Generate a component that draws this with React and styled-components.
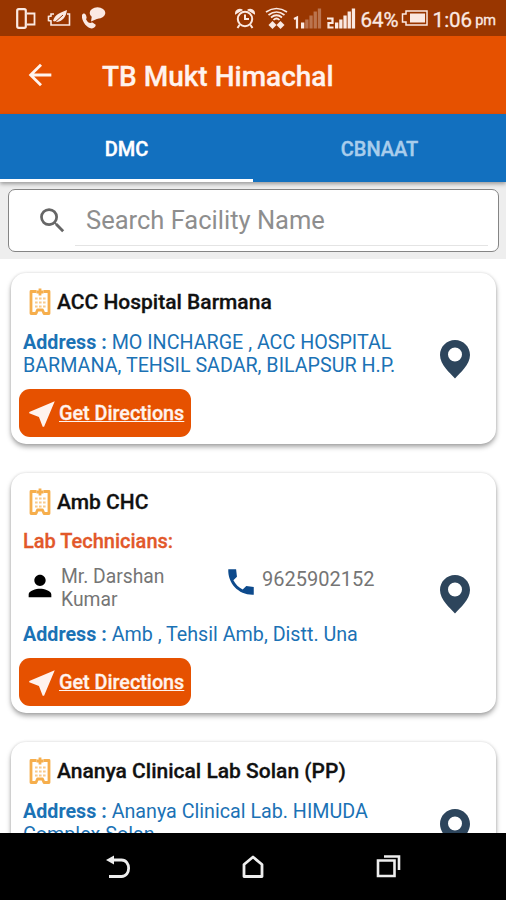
import React from 'react';
import styled, { createGlobalStyle } from 'styled-components';
import { MdArrowBack, MdSearch, MdPerson, MdNearMe } from 'react-icons/md';

const GlobalStyle = createGlobalStyle`
    * {
        box-sizing: border-box;
    }
    body {
        margin: 0;
        background: #ffffff;
        font-family: Roboto, "Liberation Sans", sans-serif;
    }
    svg {
        display: block;
        flex: none;
    }
`;

const Screen = styled.div`
    width: 506px;
    height: 900px;
    display: flex;
    flex-direction: column;
    overflow: hidden;
    background: #ffffff;
`;
const StatusBar = styled.div`
    flex: none;
    height: 36px;
    padding: 0 10px 0 16px;
    display: flex;
    align-items: center;
    justify-content: space-between;
    background: #993600;
    color: #fbe9e2;
`;
const StatusGroup = styled.div`
    display: flex;
    align-items: center;
    gap: ${props => props.$gap}px;
`;
const StatusText = styled.span`
    font-size: ${props => props.$size || 20.5}px;
    line-height: 24px;
    padding-top: ${props => props.$top || 3}px;
    white-space: nowrap;
    -webkit-text-stroke: 0.3px currentColor;
`;
const AppBar = styled.header`
    flex: none;
    height: 78px;
    padding-left: 23px;
    display: flex;
    align-items: center;
    background: #e65100;
    color: #fff3ee;
`;
const AppTitle = styled.h1`
    margin: 3px 0 0 45px;
    font-size: 28px;
    font-weight: 500;
    line-height: 34px;
    white-space: nowrap;
    -webkit-text-stroke: 0.3px currentColor;
`;
const Tabs = styled.nav`
    flex: none;
    height: 68px;
    display: grid;
    grid-template-columns: 1fr 1fr;
    background: #1270bf;
    box-shadow: 0 2px 4px rgba(0, 0, 0, 0.35);
    position: relative;
`;
const Tab = styled.div`
    display: flex;
    align-items: center;
    justify-content: center;
    padding-top: 5px;
    border-bottom: 3px solid ${props => (props.$active ? '#ffffff' : 'transparent')};
    color: ${props => (props.$active ? '#ffffff' : '#a9cdec')};
    font-size: 20px;
    font-weight: 500;
    -webkit-text-stroke: 0.4px currentColor;
`;
const SearchArea = styled.div`
    flex: none;
    height: 77px;
    padding: 7px 7px 0 8px;
    background: #eeeeee;
`;
const SearchBox = styled.div`
    height: 63px;
    padding: 0 10px 0 27px;
    display: flex;
    align-items: center;
    background: #ffffff;
    border: 1px solid #858585;
    border-radius: 7px;
    color: #666666;
`;
const SearchField = styled.div`
    flex: 1;
    height: 50px;
    margin: 0 0 0 6px;
    padding: 0 0 0 11px;
    display: flex;
    align-items: center;
    border-bottom: 1px solid #e4e4e4;
    color: #8e8e8e;
    font-size: 25.5px;
    white-space: nowrap;
`;
const List = styled.main`
    flex: 1;
    min-height: 0;
    padding: 14px 10px 0 11px;
    display: flex;
    flex-direction: column;
    gap: 29px;
    overflow: hidden;
`;
const Card = styled.section`
    flex: none;
    padding: 12px 26px 7px 8px;
    display: flex;
    align-items: center;
    justify-content: space-between;
    background: #ffffff;
    border-radius: 15px;
    box-shadow: 0 3px 5px rgba(0, 0, 0, 0.34), 0 0 3px rgba(0, 0, 0, 0.12);
`;
const CardBody = styled.div`
    width: 395px;
    display: flex;
    flex-direction: column;
    align-items: flex-start;
`;
const CardTitle = styled.div`
    height: 34px;
    padding-left: 9px;
    display: flex;
    align-items: center;
    gap: 5px;
    color: #111111;
    font-size: 21px;
    font-weight: 500;
    white-space: nowrap;
    -webkit-text-stroke: 0.3px currentColor;
`;
const Technicians = styled.div`
    margin: 11px 0 0 4px;
    color: #e2582a;
    font-size: 20px;
    font-weight: 500;
    line-height: 23px;
    -webkit-text-stroke: 0.3px currentColor;
`;
const Contact = styled.div`
    margin-top: 12px;
    height: 46px;
    padding-left: 4px;
    display: grid;
    grid-template-columns: 38px 163px 38px 1fr;
    align-items: start;
    color: #757575;
    line-height: 23px;
`;
const ContactIcon = styled.span`
    padding-top: ${props => props.$top || 0}px;
    color: ${props => props.$color};
`;
const ContactText = styled.span`
    max-width: 130px;
    padding-top: ${props => props.$top || 0}px;
    font-size: ${props => props.$size}px;
`;
const Address = styled.div`
    margin: 12px 0 0 4px;
    color: #1b72b5;
    font-size: 19.7px;
    line-height: 23px;
`;
const Label = styled.span`
    font-weight: 700;
`;
const DirectionsButton = styled.button`
    width: 172px;
    height: 48px;
    margin-top: 12px;
    padding: 1px 0 0 6px;
    display: flex;
    align-items: center;
    border: 0;
    border-radius: 11px;
    background: #e65100;
    color: #fff3ee;
    font-family: inherit;
    font-size: 19.8px;
    font-weight: 500;
    text-decoration: underline;
    white-space: nowrap;
    -webkit-text-stroke: 0.3px currentColor;
`;
const NavBar = styled.footer`
    flex: none;
    height: 67px;
    padding: 0 105px 0 105px;
    display: flex;
    align-items: center;
    justify-content: space-between;
    background: #000000;
`;

const PhoneIcon = () => (
    <svg width="20" height="21" viewBox="0 0 20 21" fill="none" stroke="currentColor" strokeWidth="2.200">
        <rect x="1.200" y="1.200" width="8.600" height="18.600" rx="1.500" />
        <path d="M11 5.500h7.500v11H11" strokeWidth="1.800" />
    </svg>
);
const PowerSaverIcon = () => (
    <svg width="24" height="17" viewBox="0 0 24 17" fill="none" stroke="currentColor" strokeWidth="1.600">
        <path d="M7 4H4v2L1.500 6.500v4L4 11v4h18.500V4H20" />
        <path d="M6 11C8 4 13 3 20 0c-1 7-4 11-10 12z" fill="currentColor" stroke="none" />
        <path d="M6 14l10-9" stroke="#993600" strokeWidth="1" />
    </svg>
);
const CallBubbleIcon = () => (
    <svg width="24" height="22" viewBox="0 0 24 22" fill="currentColor">
        <path d="M0 8c2-3 4-1 4.500 2 .5 1-1 2 0 3 1 2 2 3 4 3 1-1 2-1 5 1.500 1 2-2 4-4 4C4 21-1 13 0 8z" />
        <ellipse cx="15.500" cy="6" rx="7.800" ry="5.800" />
        <path d="M10 8l-1 6.500 7-3z" />
    </svg>
);
const AlarmIcon = () => (
    <svg width="20" height="21" viewBox="0 0 20 21" fill="none" stroke="currentColor" strokeWidth="2">
        <circle cx="10" cy="11" r="7.200" />
        <path d="M10 6.500V11h4M4.500 17L2.500 20M15.500 17l2 3" />
        <path d="M1 5c0-2 3-4 5-3zM19 5c0-2-3-4-5-3z" fill="currentColor" />
    </svg>
);
const WifiIcon = () => (
    <svg width="23" height="23" viewBox="0 0 23 23" fill="none" stroke="currentColor" strokeWidth="1.700">
        <path d="M1 5Q11.500-2 22 5M3.500 8Q11.500 2 19.500 8M6 10.500Q11.500 6 17 10.500M8.500 13Q11.500 10 14.500 13" />
        <path d="M3.500 18l4-4 4 4-4 4zM11.500 18l4-4 4 4-4 4z" fill="currentColor" stroke="none" />
    </svg>
);
const SimSignal = ({ sim, level }) => (
    <svg width="29" height="22" viewBox="0 0 29 22" fill="currentColor">
        {sim === 1 ? (
            <path d="M1 12l3-1.500v11" fill="none" stroke="currentColor" strokeWidth="2.200" />
        ) : (
            <path d="M0 11.500h5.500v4.500H1.500v4.500h5" fill="none" stroke="currentColor" strokeWidth="2.200" />
        )}
        {[6, 9, 13, 17, 20].map((height, i) => (
            <rect key={height} x={8 + i * 4.2} y={21.5 - height} width="3.300" height={height} opacity={i < level ? 1 : 0.35} />
        ))}
    </svg>
);
const BatteryIcon = () => (
    <svg width="27" height="16" viewBox="0 0 27 16">
        <path d="M5 1h21v14H5v-3H1.500V4H5z" fill="none" stroke="currentColor" strokeWidth="1.500" />
        <path d="M9 3.500h15v9H9z" fill="currentColor" />
    </svg>
);
const HospitalIcon = () => (
    <svg width="24" height="28" viewBox="0 0 24 28" fill="none" stroke="#f6ae4c">
        <path d="M8.500 3.500H3V25.500h5l1.500-3.500h5l1.500 3.500h5V3.500h-5.500" strokeWidth="2.800" strokeLinejoin="round" />
        <path d="M12 0.500v7M8.500 4h7" strokeWidth="2.800" />
        <path d="M7 10.500h11M7 14.500h11M7 18.500h11" strokeWidth="2.200" strokeDasharray="2.600 1.400" opacity="0.65" />
    </svg>
);
const HandsetIcon = () => (
    <svg width="34" height="34" viewBox="0 0 24 24" fill="currentColor">
        <path d="M21 15.460l-5.270-.61-2.520 2.520c-2.830-1.440-5.150-3.750-6.590-6.590l2.530-2.530L8.540 3H3.030C2.450 13.180 10.820 21.550 21 20.970v-5.510z" />
    </svg>
);
const PinIcon = () => (
    <svg width="30" height="42" viewBox="0 0 30 42">
        <path
            d="M15 0C6.700 0 0 6.700 0 15c0 9.500 10 18 15 23.500 5-5.500 15-14 15-23.500C30 6.700 23.300 0 15 0zm0 21.500a7 7 0 1 1 0-14 7 7 0 0 1 0 14z"
            fill="#2d455c"
        />
    </svg>
);
const BackIcon = () => (
    <svg width="26" height="24" viewBox="0 0 26 24" fill="none" stroke="#eeeeee" strokeWidth="2.800">
        <path d="M6 5h10.500c9.500 0 9.500 16.500 0 16.500H4" />
        <path d="M1 5l8-4.500v9z" fill="#eeeeee" stroke="none" />
    </svg>
);
const HomeIcon = () => (
    <svg width="23" height="24" viewBox="0 0 23 24" fill="none" stroke="#eeeeee" strokeWidth="2.800" strokeLinejoin="round">
        <path d="M2 9.500l9-7.500 9 7.500v12H2z" />
    </svg>
);
const RecentIcon = () => (
    <svg width="25" height="23" viewBox="0 0 25 23" fill="none" stroke="#eeeeee" strokeWidth="2.600">
        <path d="M2 5.500h16.500v15.500H2z" />
        <path d="M8 1.500h15V15" />
    </svg>
);

const facilities = [
    {
        name: 'ACC Hospital Barmana',
        address: 'MO INCHARGE , ACC HOSPITAL BARMANA, TEHSIL SADAR, BILAPSUR H.P.',
    },
    {
        name: 'Amb CHC',
        technician: 'Mr. Darshan Kumar',
        phone: '9625902152',
        address: 'Amb , Tehsil Amb, Distt. Una',
    },
    {
        name: 'Ananya Clinical Lab Solan (PP)',
        address: 'Ananya Clinical Lab. HIMUDA Complex Solan',
    },
];

const FacilityCard = ({ facility }) => (
    <Card>
        <CardBody>
            <CardTitle>
                <HospitalIcon />
                {facility.name}
            </CardTitle>
            {facility.technician && (
                <>
                    <Technicians>Lab Technicians:</Technicians>
                    <Contact>
                        <ContactIcon $color="#000000" $top={4}><MdPerson size={34} /></ContactIcon>
                        <ContactText $size={19.3}>{facility.technician}</ContactText>
                        <ContactIcon $color="#0d4a8c"><HandsetIcon /></ContactIcon>
                        <ContactText $size={20} $top={3}>{facility.phone}</ContactText>
                    </Contact>
                </>
            )}
            <Address>
                <Label>Address :</Label> {facility.address}
            </Address>
            <DirectionsButton>
                <MdNearMe size={34} />
                Get Directions
            </DirectionsButton>
        </CardBody>
        <PinIcon />
    </Card>
);

const App = () => {
    return (
        <>
            <GlobalStyle />
            <Screen>
                <StatusBar>
                    <StatusGroup $gap={11}>
                        <PhoneIcon />
                        <PowerSaverIcon />
                        <CallBubbleIcon />
                    </StatusGroup>
                    <StatusGroup $gap={5}>
                        <StatusGroup $gap={10}>
                            <AlarmIcon />
                            <WifiIcon />
                        </StatusGroup>
                        <StatusGroup $gap={5}>
                            <SimSignal sim={1} level={1} />
                            <SimSignal sim={2} level={5} />
                        </StatusGroup>
                        <StatusGroup $gap={2}>
                            <StatusText>64%</StatusText>
                            <BatteryIcon />
                        </StatusGroup>
                        <StatusGroup $gap={3}>
                            <StatusText>1:06</StatusText>
                            <StatusText $size={14.5} $top={6}>pm</StatusText>
                        </StatusGroup>
                    </StatusGroup>
                </StatusBar>
                <AppBar>
                    <MdArrowBack size={34} />
                    <AppTitle>TB Mukt Himachal</AppTitle>
                </AppBar>
                <Tabs>
                    <Tab $active>DMC</Tab>
                    <Tab>CBNAAT</Tab>
                </Tabs>
                <SearchArea>
                    <SearchBox>
                        <MdSearch size={33} />
                        <SearchField>Search Facility Name</SearchField>
                    </SearchBox>
                </SearchArea>
                <List>
                    {facilities.map(facility => (
                        <FacilityCard key={facility.name} facility={facility} />
                    ))}
                </List>
                <NavBar>
                    <BackIcon />
                    <HomeIcon />
                    <RecentIcon />
                </NavBar>
            </Screen>
        </>
    );
};

export default App;
